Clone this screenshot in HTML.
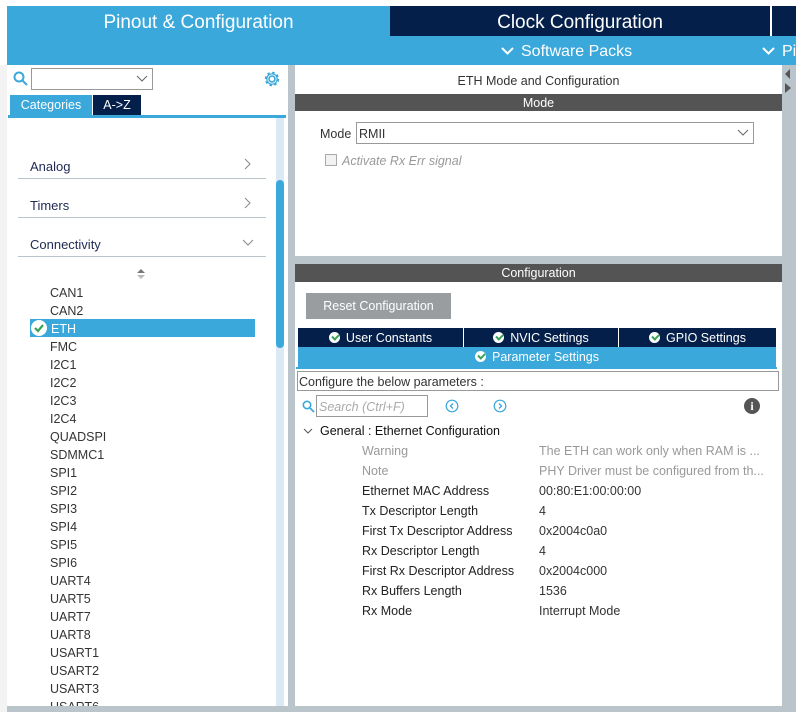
<!DOCTYPE html>
<html><head><meta charset="utf-8"><style>
*{margin:0;padding:0;box-sizing:border-box}
body{width:796px;height:712px;background:#fff;position:relative;overflow:hidden;font-family:"Liberation Sans",sans-serif;font-size:13px;color:#222}
.a{position:absolute;white-space:nowrap}
.chk{display:inline-block;width:11px;height:11px;border-radius:50%;background:#fff;position:relative;vertical-align:-1px;margin-right:6px}
.chk:after{content:"";position:absolute;left:3px;top:2px;width:5px;height:3px;border-left:2px solid #3aa35a;border-bottom:2px solid #3aa35a;transform:rotate(-45deg)}
.li{position:absolute;left:50px;font-size:12.5px;color:#333}
.rl{position:absolute;left:362px;font-size:12.5px;color:#222}
.rv{position:absolute;left:539px;font-size:12.5px;color:#333}
</style></head><body>
<div class="a" style="left:7px;top:6px;width:383px;height:59px;background:#3aa8db"></div>
<div class="a" style="left:7px;top:12px;width:383px;text-align:center;color:#fff;font-size:19px">Pinout &amp; Configuration</div>
<div class="a" style="left:390px;top:6px;width:380px;height:30px;background:#04204a"></div>
<div class="a" style="left:390px;top:12px;width:380px;text-align:center;color:#fff;font-size:19px">Clock Configuration</div>
<div class="a" style="left:771px;top:6px;width:25px;height:30px;background:#04204a;border-left:1px solid #fff"></div>
<div class="a" style="left:390px;top:36px;width:406px;height:29px;background:#3aa8db"></div>
<svg class="a" style="left:501px;top:47px" width="13" height="9"><path d="M1 1l5.5 5.5L12 1" fill="none" stroke="#fff" stroke-width="2"/></svg>
<div class="a" style="left:521px;top:43px;color:#fff;font-size:16px">Software Packs</div>
<svg class="a" style="left:762px;top:47px" width="13" height="9"><path d="M1 1l5.5 5.5L12 1" fill="none" stroke="#fff" stroke-width="2"/></svg>
<div class="a" style="left:782px;top:43px;color:#fff;font-size:16px">Pi</div>
<div class="a" style="left:0;top:65px;width:796px;height:647px;background:#b9c4cb"></div>
<div class="a" style="left:0;top:65px;width:7px;height:647px;background:#f3f3f3"></div>
<div class="a" style="left:7px;top:65px;width:281px;height:641px;background:#fff"></div>
<svg class="a" style="left:13px;top:71px" width="16" height="16"><circle cx="6" cy="6" r="4.5" fill="none" stroke="#3aa8db" stroke-width="2"/><line x1="9.5" y1="9.5" x2="14" y2="14" stroke="#3aa8db" stroke-width="2"/></svg>
<div class="a" style="left:31px;top:68px;width:122px;height:22px;border:1px solid #999"></div>
<svg class="a" style="left:136px;top:75px" width="12" height="8"><path d="M1 1l5 5 5-5" fill="none" stroke="#666"/></svg>
<svg class="a" style="left:263px;top:70px" width="18" height="18" viewBox="0 0 18 18"><circle cx="9" cy="9" r="3" fill="none" stroke="#3aa8db" stroke-width="1.6"/><circle cx="9" cy="9" r="6" fill="none" stroke="#3aa8db" stroke-width="2.5" stroke-dasharray="2.4 2.3"/><circle cx="9" cy="9" r="5.2" fill="none" stroke="#3aa8db" stroke-width="1.2"/></svg>
<div class="a" style="left:10px;top:95px;width:82px;height:20px;background:#3aa8db;color:#fff;text-align:center;font-size:12.5px;line-height:20px">Categories</div>
<div class="a" style="left:93px;top:95px;width:48px;height:20px;background:#04204a;color:#fff;text-align:center;font-size:12.5px;line-height:20px">A-&gt;Z</div>
<div class="a" style="left:8px;top:115px;width:278px;height:3px;background:#3aa8db"></div>
<div class="a" style="left:276px;top:118px;width:8px;height:588px;background:#dbe9f5"></div>
<div class="a" style="left:276px;top:180px;width:8px;height:168px;background:#3aa8db;border-radius:4px"></div>
<div class="a" style="left:30px;top:159px;font-size:13px;color:#1f2a55">Analog</div>
<svg class="a" style="left:244px;top:158px" width="8" height="12"><path d="M1 1l5 5-5 5" fill="none" stroke="#888"/></svg>
<div class="a" style="left:18px;top:178px;width:248px;height:1px;background:#b9c4cb"></div>
<div class="a" style="left:30px;top:198px;font-size:13px;color:#1f2a55">Timers</div>
<svg class="a" style="left:244px;top:197px" width="8" height="12"><path d="M1 1l5 5-5 5" fill="none" stroke="#888"/></svg>
<div class="a" style="left:18px;top:217px;width:248px;height:1px;background:#b9c4cb"></div>
<div class="a" style="left:30px;top:237px;font-size:13px;color:#1f2a55">Connectivity</div>
<svg class="a" style="left:242px;top:239px" width="12" height="8"><path d="M1 1l5 5 5-5" fill="none" stroke="#888"/></svg>
<div class="a" style="left:18px;top:256px;width:248px;height:1px;background:#b9c4cb"></div>
<svg class="a" style="left:137px;top:268px" width="8" height="12"><path d="M0 5l4-4 4 4z" fill="#777"/><path d="M0 7l4 4 4-4z" fill="#bbb"/></svg>
<div class="a" style="left:30px;top:319px;width:225px;height:18px;background:#3aa8db"></div>
<div class="a" style="left:31px;top:320px;width:16px;height:16px;border-radius:50%;background:#fff"></div>
<svg class="a" style="left:31px;top:320px" width="16" height="16"><path d="M4 8l3 3 5-6" fill="none" stroke="#3aa35a" stroke-width="2.2"/></svg>
<div class="li" style="top:286px">CAN1</div>
<div class="li" style="top:304px">CAN2</div>
<div class="li" style="top:322px;color:#fff;left:51px">ETH</div>
<div class="li" style="top:340px">FMC</div>
<div class="li" style="top:358px">I2C1</div>
<div class="li" style="top:376px">I2C2</div>
<div class="li" style="top:394px">I2C3</div>
<div class="li" style="top:412px">I2C4</div>
<div class="li" style="top:430px">QUADSPI</div>
<div class="li" style="top:448px">SDMMC1</div>
<div class="li" style="top:466px">SPI1</div>
<div class="li" style="top:484px">SPI2</div>
<div class="li" style="top:502px">SPI3</div>
<div class="li" style="top:520px">SPI4</div>
<div class="li" style="top:538px">SPI5</div>
<div class="li" style="top:556px">SPI6</div>
<div class="li" style="top:574px">UART4</div>
<div class="li" style="top:592px">UART5</div>
<div class="li" style="top:610px">UART7</div>
<div class="li" style="top:628px">UART8</div>
<div class="li" style="top:646px">USART1</div>
<div class="li" style="top:664px">USART2</div>
<div class="li" style="top:682px">USART3</div>
<div class="li" style="top:700px;height:6px;overflow:hidden">USART6</div>
<div class="a" style="left:295px;top:65px;width:487px;height:191px;background:#fff"></div>
<div class="a" style="left:295px;top:74px;width:487px;text-align:center;font-size:12.5px;color:#333">ETH Mode and Configuration</div>
<div class="a" style="left:295px;top:94px;width:487px;height:17px;background:#535453;color:#fff;text-align:center;font-size:12.5px;line-height:18px">Mode</div>
<div class="a" style="left:320px;top:127px;font-size:12.5px;color:#333">Mode</div>
<div class="a" style="left:356px;top:122px;width:398px;height:22px;border:1px solid #999;font-size:12.5px;padding:4px 2px;color:#333">RMII</div>
<svg class="a" style="left:737px;top:129px" width="12" height="8"><path d="M1 1l5 5 5-5" fill="none" stroke="#666"/></svg>
<div class="a" style="left:325px;top:154px;width:12px;height:12px;border:1px solid #aaa;background:#f2f2f2"></div>
<div class="a" style="left:342px;top:154px;font-size:12.5px;font-style:italic;color:#999">Activate Rx Err signal</div>
<svg class="a" style="left:783px;top:66px" width="12" height="30"><path d="M7 3l-5 5 5 5z" fill="#555"/><path d="M2 17l6 5-6 5z" fill="#555"/></svg>
<div class="a" style="left:295px;top:264px;width:487px;height:442px;background:#fff"></div>
<div class="a" style="left:295px;top:264px;width:487px;height:18px;background:#535453;color:#fff;text-align:center;font-size:12.5px;line-height:19px">Configuration</div>
<div class="a" style="left:306px;top:293px;width:145px;height:26px;background:#9a9da0;color:#fff;text-align:center;font-size:12.5px;line-height:27px">Reset Configuration</div>
<div class="a" style="left:298px;top:328px;width:478px;height:19px;background:#04204a"></div>
<div class="a" style="left:463px;top:328px;width:1px;height:19px;background:#fff"></div>
<div class="a" style="left:618px;top:328px;width:1px;height:19px;background:#fff"></div>
<div class="a" style="left:298px;top:331px;width:165px;text-align:center;color:#fff;font-size:12.5px"><span class="chk"></span>User Constants</div>
<div class="a" style="left:464px;top:331px;width:154px;text-align:center;color:#fff;font-size:12.5px"><span class="chk"></span>NVIC Settings</div>
<div class="a" style="left:619px;top:331px;width:157px;text-align:center;color:#fff;font-size:12.5px"><span class="chk"></span>GPIO Settings</div>
<div class="a" style="left:298px;top:347px;width:478px;height:20px;background:#3aa8db;color:#fff;text-align:center;font-size:12.5px;line-height:21px"><span class="chk"></span>Parameter Settings</div>
<div class="a" style="left:296px;top:367px;width:481px;height:2px;background:#3aa8db"></div>
<div class="a" style="left:297px;top:371px;width:482px;height:20px;border:1px solid #999;font-size:12.5px;padding:3px 1px;color:#333">Configure the below parameters :</div>
<svg class="a" style="left:302px;top:400px" width="13" height="13"><circle cx="5" cy="5" r="3.7" fill="none" stroke="#3aa8db" stroke-width="1.6"/><line x1="8" y1="8" x2="12" y2="12" stroke="#3aa8db" stroke-width="1.8"/></svg>
<div class="a" style="left:316px;top:395px;width:112px;height:22px;border:1px solid #999;font-size:12.5px;font-style:italic;color:#aaa;padding:4px 2px">Search (Ctrl+F)</div>
<svg class="a" style="left:445px;top:399px" width="14" height="14"><circle cx="7" cy="7" r="5.8" fill="none" stroke="#3aa8db" stroke-width="1.2"/><path d="M8 4.5L5.5 7 8 9.5" fill="none" stroke="#3aa8db" stroke-width="1.3"/></svg>
<svg class="a" style="left:493px;top:399px" width="14" height="14"><circle cx="7" cy="7" r="5.8" fill="none" stroke="#3aa8db" stroke-width="1.2"/><path d="M6 4.5L8.5 7 6 9.5" fill="none" stroke="#3aa8db" stroke-width="1.3"/></svg>
<div class="a" style="left:744px;top:398px;width:16px;height:16px;border-radius:50%;background:#555;color:#fff;font-weight:bold;font-size:12px;text-align:center;line-height:16px;font-family:'Liberation Serif',serif">i</div>
<svg class="a" style="left:303px;top:427px" width="10" height="8"><path d="M1 2l4 4 4-4" fill="none" stroke="#555"/></svg>
<div class="a" style="left:320px;top:424px;font-size:12.5px;color:#111">General : Ethernet Configuration</div>
<div class="rl" style="top:444px;color:#999">Warning</div><div class="rv" style="top:444px;color:#999">The ETH can work only when RAM is ...</div>
<div class="rl" style="top:464px;color:#999">Note</div><div class="rv" style="top:464px;color:#999">PHY Driver must be configured from th...</div>
<div class="rl" style="top:484px">Ethernet MAC Address</div><div class="rv" style="top:484px">00:80:E1:00:00:00</div>
<div class="rl" style="top:504px">Tx Descriptor Length</div><div class="rv" style="top:504px">4</div>
<div class="rl" style="top:524px">First Tx Descriptor Address</div><div class="rv" style="top:524px">0x2004c0a0</div>
<div class="rl" style="top:544px">Rx Descriptor Length</div><div class="rv" style="top:544px">4</div>
<div class="rl" style="top:564px">First Rx Descriptor Address</div><div class="rv" style="top:564px">0x2004c000</div>
<div class="rl" style="top:584px">Rx Buffers Length</div><div class="rv" style="top:584px">1536</div>
<div class="rl" style="top:604px">Rx Mode</div><div class="rv" style="top:604px">Interrupt Mode</div>
</body></html>
